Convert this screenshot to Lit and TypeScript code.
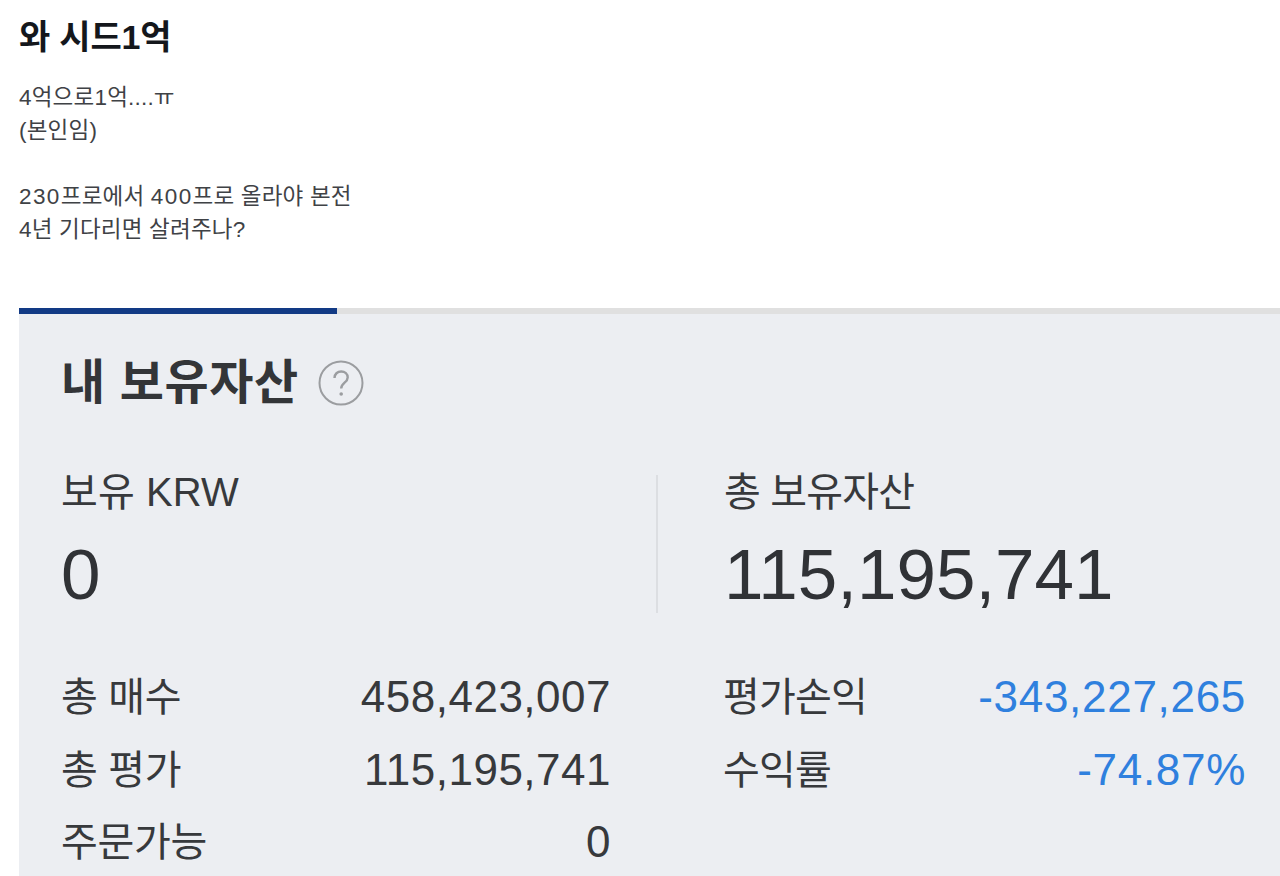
import { LitElement, html, css } from 'lit';
import { customElement } from 'lit/decorators.js';

const leftRows = [
  ['총 매수', '458,423,007'],
  ['총 평가', '115,195,741'],
  ['주문가능', '0'],
];

const rightRows = [
  ['평가손익', '-343,227,265'],
  ['수익률', '-74.87%'],
];

@customElement('app-root')
export class AppRoot extends LitElement {
  static styles = css`
    :host {
      display: block;
      height: 876px;
      overflow: hidden;
      background: #fff;
      font-family: 'Liberation Sans', 'Noto Sans CJK KR', sans-serif;
    }

    .post {
      height: 308px;
      padding: 0 19px;
      box-sizing: border-box;
    }

    h1 {
      margin: 0;
      padding-top: 17px;
      font-size: 34px;
      line-height: 40px;
      font-weight: 700;
      color: #14171c;
      letter-spacing: -0.2px;
    }

    .body {
      margin-top: 24px;
      font-size: 22.5px;
      line-height: 33px;
      color: #3f4246;
      letter-spacing: 0.2px;
    }

    /* digits run wider than the hangul in the reference */
    .num {
      letter-spacing: 1.4px;
    }

    .shot {
      margin-left: 19px;
    }

    .progress {
      height: 6px;
      background: #e0e0e0;
    }

    .progress div {
      width: 318px;
      height: 100%;
      background: #123a85;
    }

    .panel {
      height: 562px;
      padding: 0 35px 0 42px;
      background: #eceef2;
      color: #37393c;
    }

    .title {
      display: flex;
      align-items: center;
      gap: 19px;
      padding-top: 38px;
      height: 62px;
    }

    h2 {
      margin: 0;
      font-size: 48px;
      line-height: 62px;
      font-weight: 700;
      color: #333538;
      letter-spacing: 0.6px;
    }

    .help {
      display: block;
    }

    .totals {
      display: grid;
      grid-template-columns: 595px 1fr;
      margin-top: 51px;
      height: 160px;
    }

    .total {
      height: 138px;
      margin-top: 10px;
    }

    .total + .total {
      border-left: 2px solid #dcdee2;
      padding-left: 66px;
    }

    .label {
      font-size: 40px;
      line-height: 34px;
      letter-spacing: 0.1px;
    }

    .total + .total .label {
      letter-spacing: -0.8px;
    }

    .big {
      font-size: 71px;
      line-height: 78px;
      margin-top: 27px;
      color: #303236;
    }

    .rows {
      display: grid;
      grid-template-columns: 550px 635px;
      margin-top: 50px;
    }

    .col {
      display: flex;
      flex-direction: column;
      gap: 28.5px;
    }

    .col + .col {
      padding-left: 112px;
      box-sizing: border-box;
    }

    .row {
      display: flex;
      justify-content: space-between;
      align-items: center;
      height: 44px;
      font-size: 40px;
      line-height: 44px;
      letter-spacing: -0.3px;
      white-space: nowrap;
    }

    .col + .col .row {
      letter-spacing: -0.8px;
    }

    .value {
      font-size: 44px;
      letter-spacing: 0.5px;
    }

    .col + .col .value {
      color: #2f80de;
      letter-spacing: 0.7px;
    }
  `;

  render() {
    return html`
      <section class="post">
        <h1>와 시드1억</h1>
        <div class="body">
          4억으로1억....ㅠ<br />
          (본인임)<br /><br />
          <span class="num">230</span>프로에서 <span class="num">400</span>프로 올라야 본전<br />
          4년 기다리면 살려주나?
        </div>
      </section>
      <section class="shot">
        <div class="progress"><div></div></div>
        <div class="panel">
          <div class="title">
            <h2>내 보유자산</h2>
            <svg class="help" width="46" height="46" viewBox="0 0 46 46" fill="none">
              <circle cx="23" cy="23" r="21.5" stroke="#9b9da0" stroke-width="2" />
              <path d="M16.5 18c0-4 3-6.5 6.700-6.500s6.500 2.500 6.500 6c0 5-6.500 5.500-6.500 11" stroke="#9b9da0" stroke-width="2.400" />
              <circle cx="23.200" cy="34" r="1.800" fill="#9b9da0" />
            </svg>
          </div>
          <div class="totals">
            <div class="total">
              <div class="label">보유 KRW</div>
              <div class="big">0</div>
            </div>
            <div class="total">
              <div class="label">총 보유자산</div>
              <div class="big">115,195,741</div>
            </div>
          </div>
          <div class="rows">
            <div class="col">
              ${leftRows.map(([k, v]) => html`<div class="row"><span>${k}</span><span class="value">${v}</span></div>`)}
            </div>
            <div class="col">
              ${rightRows.map(([k, v]) => html`<div class="row"><span>${k}</span><span class="value">${v}</span></div>`)}
            </div>
          </div>
        </div>
      </section>
    `;
  }
}
